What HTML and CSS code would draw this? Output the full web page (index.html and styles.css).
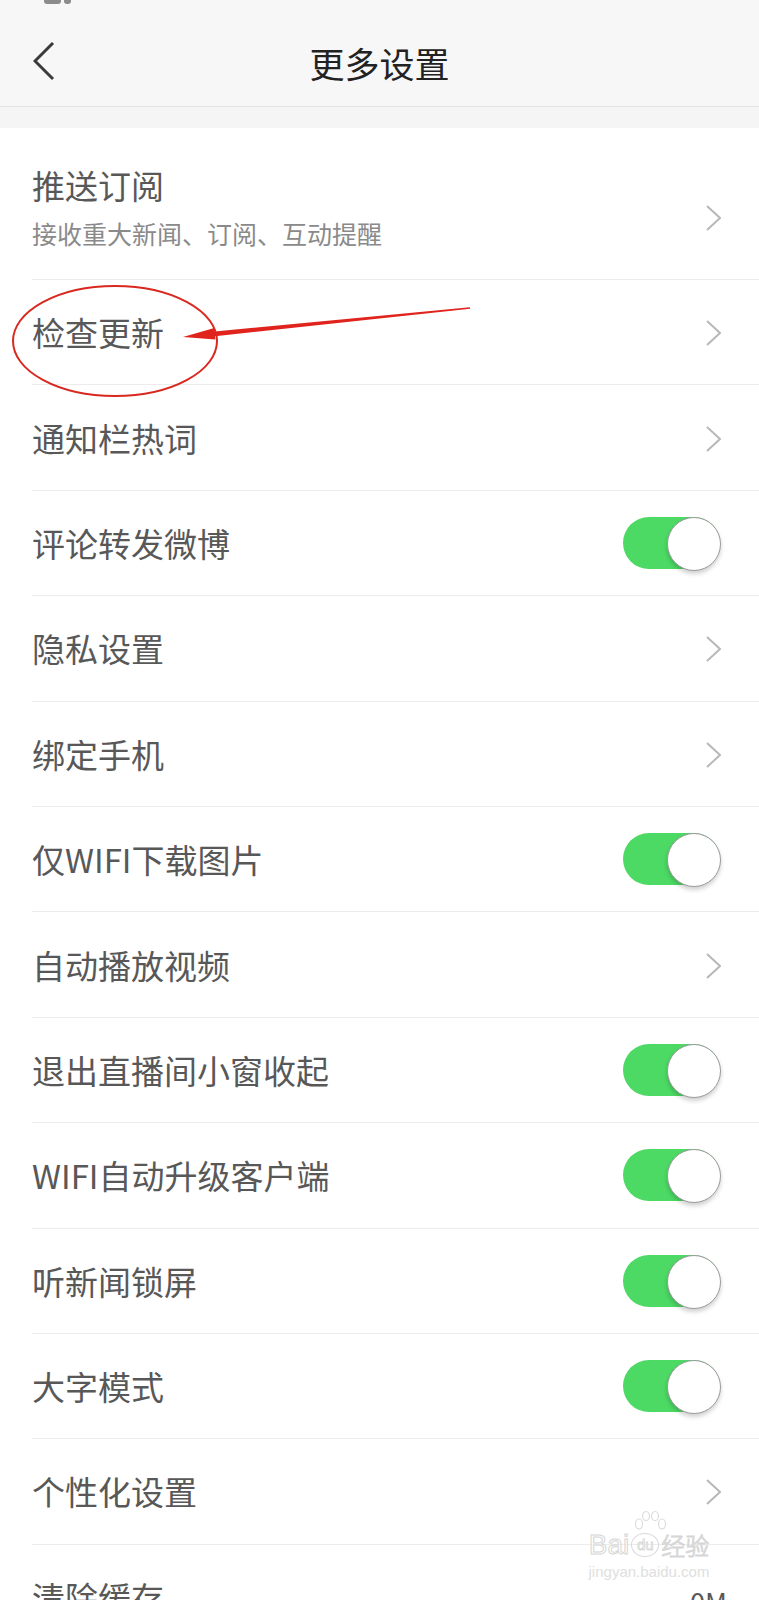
FILE: index.html
```html
<!DOCTYPE html>
<html lang="zh-CN">
<head>
  <meta charset="UTF-8" />
  <title>更多设置</title>
  <link rel="stylesheet" href="styles.css">
</head>
<body>
  <div class="page">
    <div class="topbar">
      <div class="status">
        <span class="sig"></span><span class="sig small"></span>
      </div>
      <div class="nav">
        <svg class="back" width="24" height="40" viewBox="0 0 24 40">
          <polyline points="20,1 2,19 20,37" fill="none" stroke="#3a3a3a" stroke-width="3" />
        </svg>
        <div class="title">更多设置</div>
      </div>
    </div>
    <div class="gap"></div>

    <div class="list">
      <div class="row row-tall">
        <div class="text">
          <div class="label">推送订阅</div>
          <div class="sub">接收重大新闻、订阅、互动提醒</div>
        </div>
        <span class="arrow"></span>
      </div>
      <div class="row"><div class="label">检查更新</div><span class="arrow"></span></div>
      <div class="row"><div class="label">通知栏热词</div><span class="arrow"></span></div>
      <div class="row"><div class="label">评论转发微博</div><span class="switch"></span></div>
      <div class="row"><div class="label">隐私设置</div><span class="arrow"></span></div>
      <div class="row"><div class="label">绑定手机</div><span class="arrow"></span></div>
      <div class="row"><div class="label">仅WIFI下载图片</div><span class="switch"></span></div>
      <div class="row"><div class="label">自动播放视频</div><span class="arrow"></span></div>
      <div class="row"><div class="label">退出直播间小窗收起</div><span class="switch"></span></div>
      <div class="row"><div class="label">WIFI自动升级客户端</div><span class="switch"></span></div>
      <div class="row"><div class="label">听新闻锁屏</div><span class="switch"></span></div>
      <div class="row"><div class="label">大字模式</div><span class="switch"></span></div>
      <div class="row"><div class="label">个性化设置</div><span class="arrow"></span></div>
      <div class="row row-last"><div class="label">清除缓存</div><span class="size">0M</span></div>
    </div>

    <!-- red marks drawn over the screenshot -->
    <svg class="marks" width="759" height="420" viewBox="0 0 759 420">
      <ellipse cx="115" cy="341" rx="102" ry="55" fill="none" stroke="#d8281f" stroke-width="2" />
      <polygon fill="#e0231c" points="469.9,307.2 214.6,331.4 214.3,328 183,337 215.4,339.6 215,336.2 470.1,308.8" />
    </svg>

    <div class="watermark">
      <svg class="paw" width="40" height="30" viewBox="0 0 40 30">
        <g fill="none" stroke="#dcdcdc" stroke-width="1.2">
          <ellipse cx="9" cy="14" rx="3.5" ry="5" />
          <ellipse cx="16" cy="6" rx="3.5" ry="4.5" />
          <ellipse cx="25" cy="6" rx="3.5" ry="4.5" />
          <ellipse cx="32" cy="14" rx="3.5" ry="5" />
        </g>
      </svg>
      <div class="wm-line">
        <span class="wm-bai">Bai</span><span class="wm-du">du</span><span class="wm-jy">经验</span>
      </div>
      <div class="wm-url">jingyan.baidu.com</div>
    </div>
  </div>
</body>
</html>
```

FILE: styles.css
```css
:root {
  --label: #585858;
  --sub: #8a8a8a;
  --line: #ececec;
  --green: #4cd964;
}

* {
  box-sizing: border-box;
}

body {
  margin: 0;
  background: #fff;
  font-family: "Noto Sans CJK SC", "Noto Sans", sans-serif;
  overflow: hidden;
}

.page {
  position: relative;
  width: 759px;
  height: 1600px;
  overflow: hidden;
}

.topbar {
  background: #f7f7f7;
  border-bottom: 1px solid #e3e3e3;
  height: 107px;
}

.status {
  height: 20px;
  padding-left: 44px;
  display: flex;
  gap: 3px;
}

.sig {
  width: 17px;
  height: 6px;
  margin-top: -2px;
  border-radius: 0 0 3px 3px;
  background: #8c8c8c;
}

.sig.small {
  width: 7px;
}

.nav {
  height: 86px;
  position: relative;
  display: flex;
  align-items: center;
  justify-content: center;
}

.back {
  position: absolute;
  left: 33px;
  top: 22px;
}

.title {
  font-size: 35px;
  color: #222;
  line-height: 40px;
}

.gap {
  height: 21px;
  background: #f5f5f5;
}

.list {
  padding-left: 32px;
}

.row {
  height: 105.4px;
  display: flex;
  align-items: center;
  justify-content: space-between;
  padding-right: 38px;
  border-bottom: 1px solid var(--line);
}

.row-tall {
  height: 152px;
  align-items: flex-start;
  padding-top: 37px;
}

.row-tall .arrow {
  margin-top: 40px;
}

.label {
  font-size: 33px;
  line-height: 40px;
  color: var(--label);
}

.sub {
  margin-top: 13px;
  font-size: 25px;
  line-height: 30px;
  color: var(--sub);
}

.arrow {
  width: 15px;
  height: 26px;
  margin-top: 2px;
  background: no-repeat center / 15px 26px url("data:image/svg+xml,%3Csvg xmlns='http://www.w3.org/2000/svg' width='15' height='26' viewBox='0 0 15 26'%3E%3Cpolyline points='1,1 14,13 1,25' fill='none' stroke='%23b8b8b8' stroke-width='2'/%3E%3C/svg%3E");
}

.switch {
  position: relative;
  width: 97px;
  height: 52px;
  margin-right: 1px;
  border-radius: 26px;
  background: var(--green);
}

.switch::after {
  content: "";
  position: absolute;
  right: -1px;
  top: 0;
  width: 52px;
  height: 52px;
  border-radius: 50%;
  background: #fff;
  border: 1.5px solid #9a9a9a;
  box-shadow: 0 3px 4px rgba(0, 0, 0, 0.18);
}

.row-last {
  border-bottom: none;
}

.size {
  font-size: 27px;
  color: var(--label);
  margin-top: 8px;
  margin-right: -6px;
}

.marks {
  position: absolute;
  left: 0;
  top: 0;
  pointer-events: none;
}

.watermark {
  position: absolute;
  left: 578px;
  top: 1510px;
  width: 142px;
  text-align: center;
  pointer-events: none;
}

.paw {
  display: block;
  margin: 0 0 -8px 52px;
}

.wm-line {
  display: flex;
  align-items: center;
  justify-content: center;
  line-height: 26px;
}

.wm-bai {
  font-family: "Liberation Sans", sans-serif;
  font-size: 28px;
  color: rgba(255, 255, 255, 0.5);
  -webkit-text-stroke: 1px #d6d6d6;
}

.wm-du {
  font-family: "Liberation Sans", sans-serif;
  font-size: 15px;
  width: 28px;
  height: 24px;
  line-height: 22px;
  margin: 0 2px;
  border: 1.2px solid #dadada;
  border-radius: 50%;
  color: rgba(255, 255, 255, 0.5);
  -webkit-text-stroke: 0.8px #d6d6d6;
}

.wm-jy {
  font-size: 24px;
  font-weight: 300;
  color: rgba(255, 255, 255, 0.5);
  -webkit-text-stroke: 1px #d6d6d6;
}

.wm-url {
  margin-top: 5px;
  font-family: "Liberation Sans", sans-serif;
  font-size: 15px;
  color: #e0e0e0;
}
```
